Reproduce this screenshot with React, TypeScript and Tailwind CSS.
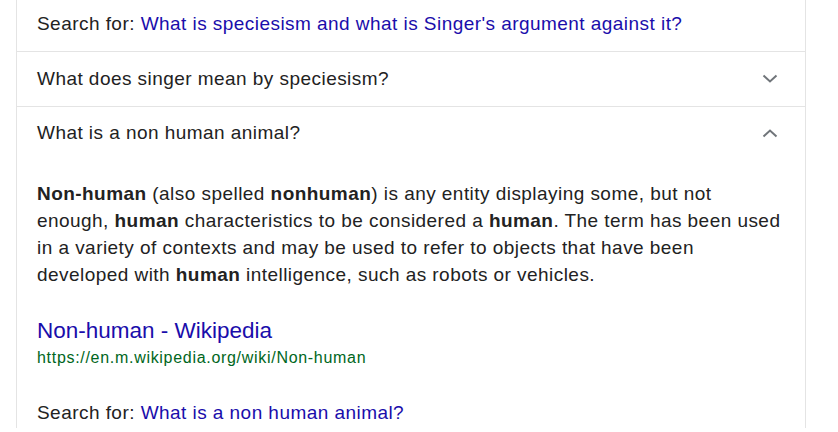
function Chevron({ up }: { up?: boolean }) {
  return (
    <svg width="16" height="10" viewBox="0 0 16 10" className="text-[#70757a]">
      <path
        d={up ? 'M1.5 8.5 8 2.5l6.5 6' : 'M1.5 1.5 8 7.5l6.5-6'}
        fill="none"
        stroke="currentColor"
        strokeWidth="2"
      />
    </svg>
  );
}

function Row({ children, open }: { children: React.ReactNode; open?: boolean }) {
  return (
    <div className="flex items-center justify-between h-[54px] pl-5 pr-[27px]">
      <span>{children}</span>
      <Chevron up={open} />
    </div>
  );
}

export default function App() {
  return (
    <div className="w-[838px] h-[432px] bg-white overflow-hidden font-['Liberation_Sans',Arial,sans-serif] text-[19px] tracking-[0.45px] text-[#222]">
      <div className="ml-4 w-[790px] border-x border-[#e4e4e4]">
        <div className="h-[52px] flex items-center pl-5 pb-[3px] border-b border-[#e4e4e4]">
          Search for:&nbsp;<span className="text-[#1a0dab]">What is speciesism and what is Singer's argument against it?</span>
        </div>
        <div className="border-b border-[#e4e4e4]">
          <Row>What does singer mean by speciesism?</Row>
        </div>
        <div>
          <div className="-mt-[1px]">
            <Row open>What is a non human animal?</Row>
          </div>
          <div className="pl-5 pr-4 pt-[20px]">
            <p className="w-[750px] leading-[27px]">
              <b>Non-human</b> (also spelled <b>nonhuman</b>) is any entity displaying some, but not enough, <b>human</b> characteristics to be considered a <b>human</b>. The term has been used in a variety of contexts and may be used to refer to objects that have been developed with <b>human</b> intelligence, such as robots or vehicles.
            </p>
            <div className="mt-[29px] text-[22.5px] tracking-normal leading-[28px] text-[#1a0dab]">Non-human - Wikipedia</div>
            <div className="text-[16px] tracking-[0.7px] leading-[26px] text-[#006621]">https://en.m.wikipedia.org/wiki/Non-human</div>
            <div className="mt-[28px]">
              Search for:&nbsp;<span className="text-[#1a0dab]">What is a non human animal?</span>
            </div>
          </div>
        </div>
      </div>
    </div>
  );
}
